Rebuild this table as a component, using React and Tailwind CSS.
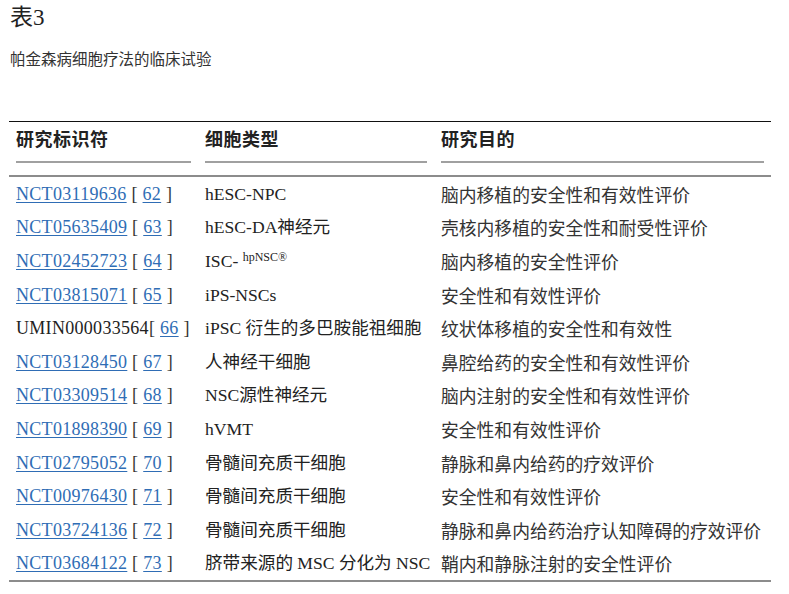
const rows = [
  { id: "NCT03119636", link: true, ref: "62", cell: "hESC-NPC", aim: "脑内移植的安全性和有效性评价" },
  { id: "NCT05635409", link: true, ref: "63", cell: "hESC-DA神经元", aim: "壳核内移植的安全性和耐受性评价" },
  { id: "NCT02452723", link: true, ref: "64", cell: "isc", aim: "脑内移植的安全性评价" },
  { id: "NCT03815071", link: true, ref: "65", cell: "iPS-NSCs", aim: "安全性和有效性评价" },
  { id: "UMIN000033564", link: false, ref: "66", cell: "iPSC 衍生的多巴胺能祖细胞", aim: "纹状体移植的安全性和有效性" },
  { id: "NCT03128450", link: true, ref: "67", cell: "人神经干细胞", aim: "鼻腔给药的安全性和有效性评价" },
  { id: "NCT03309514", link: true, ref: "68", cell: "NSC源性神经元", aim: "脑内注射的安全性和有效性评价" },
  { id: "NCT01898390", link: true, ref: "69", cell: "hVMT", aim: "安全性和有效性评价" },
  { id: "NCT02795052", link: true, ref: "70", cell: "骨髓间充质干细胞", aim: "静脉和鼻内给药的疗效评价" },
  { id: "NCT00976430", link: true, ref: "71", cell: "骨髓间充质干细胞", aim: "安全性和有效性评价" },
  { id: "NCT03724136", link: true, ref: "72", cell: "骨髓间充质干细胞", aim: "静脉和鼻内给药治疗认知障碍的疗效评价" },
  { id: "NCT03684122", link: true, ref: "73", cell: "脐带来源的 MSC 分化为 NSC", aim: "鞘内和静脉注射的安全性评价" },
];

const serif = "font-['Liberation_Serif','Noto_Sans_CJK_SC',serif]";

function Head({ children }) {
  return (
    <div className="px-[7px] pt-[6px]">
      <div className="border-b-2 border-[#a0a0a0] pb-[9px] text-[18px] font-bold leading-[24px] tracking-[0.5px] text-[#222]">
        {children}
      </div>
    </div>
  );
}

export default function App() {
  return (
    <div className={`min-h-[594px] w-[789px] bg-white text-[#333] ${serif}`}>
      <div className="px-[10px] pt-[4px]">
        <h2 className="text-[23px] font-normal leading-[28px] text-[#222]">表3</h2>
        <p className="mt-[15px] font-['Noto_Sans_CJK_SC',sans-serif] text-[15.5px] leading-[22px] text-[#333]">
          帕金森病细胞疗法的临床试验
        </p>
      </div>

      <div className="ml-[9px] mt-[52px] w-[762px] border-t border-b-2 border-t-[#111] border-b-[#8c8c8c]">
        <div className="grid grid-cols-[189px_236px_337px] border-b-2 border-[#8c8c8c] pb-[12px]">
          <Head>研究标识符</Head>
          <Head>细胞类型</Head>
          <Head>研究目的</Head>
        </div>
        {rows.map((r) => (
          <div key={r.id} className="grid h-[33.6px] grid-cols-[189px_236px_337px] items-center text-[17.6px] leading-[24px]">
            <div className="whitespace-nowrap px-[7px] text-[18px] tracking-[0.3px]">
              {r.link ? (
                <span className="text-[#2f6db5] underline underline-offset-2">{r.id}</span>
              ) : (
                <span className="text-[#222]">{r.id}</span>
              )}
              {r.link ? " [ " : "[ "}
              <span className="text-[#2f6db5] underline underline-offset-2">{r.ref}</span>
              {" ]"}
            </div>
            <div className="whitespace-nowrap px-[7px] text-[#222]">
              {r.cell === "isc" ? (
                <>
                  ISC- <sup className="text-[12px]">hpNSC®</sup>
                </>
              ) : (
                r.cell
              )}
            </div>
            <div className="whitespace-nowrap px-[7px] font-['Noto_Sans_CJK_SC',sans-serif] text-[17.8px] text-[#333]">
              {r.aim}
            </div>
          </div>
        ))}
      </div>
    </div>
  );
}
